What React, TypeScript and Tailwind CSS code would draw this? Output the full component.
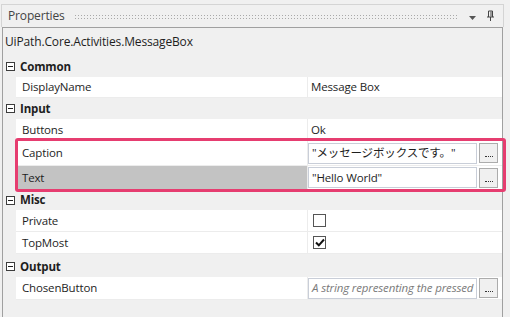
import React from "react";

function MinusBox() {
  return (
    <span className="flex items-center justify-center w-[9px] h-[9px] border border-[#3c3c3c] bg-white">
      <span className="block w-[5px] h-px bg-[#1e1e1e]" />
    </span>
  );
}

function Category({ label, h = "h-[21px]" }: { label: string; h?: string }) {
  return (
    <div className={`flex items-center ${h}`}>
      <div className="w-[13px] flex justify-center pl-px">
        <MinusBox />
      </div>
      <span className="pl-[4px] font-bold text-[#1e1e1e]">{label}</span>
    </div>
  );
}

function Row({
  name,
  h = "h-[21px]",
  selected = false,
  children,
}: {
  name: string;
  h?: string;
  selected?: boolean;
  children?: React.ReactNode;
}) {
  return (
    <div className={`flex ${h} ml-[13px] bg-white border-b border-[#ececec]`}>
      <div
        className={`w-[292px] shrink-0 pl-[6px] flex items-center border-r border-[#ececec] ${
          selected ? "bg-[#c3c3c3]" : ""
        }`}
      >
        {name}
      </div>
      <div className="flex-1 min-w-0 flex items-center pl-[3px] pr-[1px]">{children}</div>
    </div>
  );
}

function EditBox({ value, placeholder = false }: { value: string; placeholder?: boolean }) {
  return (
    <div className="flex items-center gap-[2px] w-full min-w-0 -ml-[3px]">
      <div className="flex-1 min-w-0 h-[21px] border border-[#c9ced8] bg-white flex items-center pl-[3px] overflow-hidden whitespace-nowrap">
        <span className={placeholder ? "italic text-[#7a7a7a]" : ""}>{value}</span>
      </div>
      <div className="w-[19px] shrink-0 h-[20px] border border-[#acacac] bg-[#f0f0f0] flex items-end justify-center pb-[5px]">
        <span className="block w-[8px] h-[2px] border-b border-dotted border-[#333]" />
      </div>
    </div>
  );
}

function CheckBox({ checked = false }: { checked?: boolean }) {
  return (
    <span className="flex items-center justify-center w-[13px] h-[13px] border border-[#555] bg-white ml-[2px]">
      {checked && (
        <svg width="10" height="9" viewBox="0 0 10 9">
          <path d="M1 4.5 L3.8 7.3 L9 1.5" fill="none" stroke="#111" strokeWidth="2" />
        </svg>
      )}
    </span>
  );
}

export default function App() {
  return (
    <div className="w-[510px] h-[317px] bg-[#f0f0f0] overflow-hidden relative font-['Open_Sans','Noto_Sans_CJK_JP',sans-serif] text-[11.5px] tracking-[-0.15px] text-[#1e1e1e]">
      <div className="h-[4px]" />
      {/* Title bar */}
      <div className="ml-px w-[503px] h-[23px] border-t border-l border-r border-[#d4d4d4] flex items-center pl-[6px] pr-[8px]">
        <span className="text-[#444] text-[12px]">Properties</span>
        <div className="flex-1 mx-[9px] h-[5px] bg-[radial-gradient(circle,#a9a9a9_0.7px,transparent_0.9px)] bg-size-[3px_3px]" />
        <svg width="9" height="6" viewBox="0 0 9 6" className="mt-[3px] mr-[9px]">
          <path d="M1 1 H8 L4.5 5 Z" fill="#555" />
        </svg>
        <svg width="9" height="12" viewBox="0 0 9 12">
          <path d="M2.5 1 V7 M6.5 1 V7 M2.5 1 H6.5 M1 7 H8 M4.5 7 V11" fill="none" stroke="#444" strokeWidth="1" />
          <path d="M5 1.5 V6.5" stroke="#444" strokeWidth="1" />
        </svg>
      </div>
      {/* Body */}
      <div className="ml-[2px] w-[501px] h-[290px] border-t border-l border-r border-[#a0a0a0] flex flex-col">
        <div className="h-[28px] shrink-0 flex items-center pl-[2px] text-[12px]">UiPath.Core.Activities.MessageBox</div>

        <Category label="Common" />
        <Row name="DisplayName">Message Box</Row>

        <Category label="Input" />
        <Row name="Buttons" h="h-[22px]">Ok</Row>
        <Row name="Caption" h="h-[25px]">
          <EditBox value={"\"メッセージボックスです。\""} />
        </Row>
        <Row name="Text" h="h-[24px]" selected>
          <EditBox value={"\"Hello World\""} />
        </Row>

        <Category label="Misc" h="h-[20px]" />
        <Row name="Private" h="h-[22px]">
          <CheckBox />
        </Row>
        <Row name="TopMost" h="h-[22px]">
          <CheckBox checked />
        </Row>

        <div className="h-[2px] shrink-0" />
        <Category label="Output" />
        <Row name="ChosenButton" h="h-[23px]">
          <EditBox value="A string representing the pressed button" placeholder />
        </Row>
      </div>

      {/* Highlight box */}
      <div className="absolute left-[15px] top-[138px] w-[491px] h-[54px] border-[3px] border-[#e63d70] rounded-[3px] pointer-events-none" />
    </div>
  );
}
